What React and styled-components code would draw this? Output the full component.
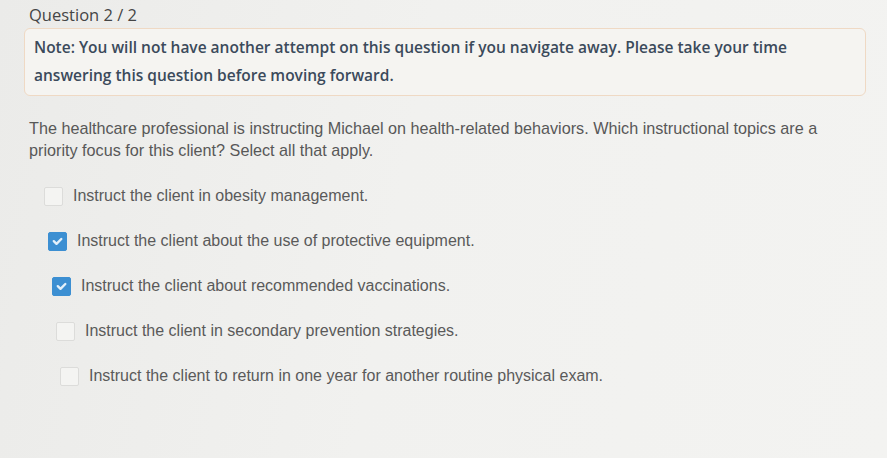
import React from 'react'
import styled, { createGlobalStyle } from 'styled-components'

const Global = createGlobalStyle`
  html, body {
    margin: 0;
    padding: 0;
    background: #efefed;
  }
  body {
    font-family: "Liberation Sans", Arial, sans-serif;
  }
`

const Page = styled.div`
  width: 887px;
  height: 458px;
  overflow: hidden;
  box-sizing: border-box;
  padding: 4px 21px 0 24px;
  background: linear-gradient(100deg, #ebebe9 0%, #f1f1ef 45%, #f3f3f1 100%);
`

const Heading = styled.div`
  font-family: "Open Sans", "Liberation Sans", sans-serif;
  font-size: 16.5px;
  color: #454545;
  padding-left: 5px;
  line-height: 22px;
`

const NoteBox = styled.div`
  margin-top: 2px;
  border: 1px solid #efd9c4;
  border-radius: 6px;
  background: #f5f4f1;
  padding: 4px 10px 6px 9px;
  font-family: "Open Sans", "Liberation Sans", sans-serif;
  font-weight: 600;
  font-size: 15.5px;
  line-height: 28px;
  color: #3b4a5b;
`

const QuestionText = styled.p`
  margin: 21px 0 0 5px;
  font-size: 16.2px;
  line-height: 22px;
  color: #585858;
  padding-right: 20px;
`

const Options = styled.div`
  margin-top: 24px;
  display: flex;
  flex-direction: column;
  gap: 23px;
`

const Option = styled.label`
  display: flex;
  align-items: center;
  gap: 10px;
  padding-left: ${p => p.$indent}px;
  font-size: 16px;
  color: #5a5a5a;
  line-height: 22px;
`

const Box = styled.span`
  width: 19px;
  height: 19px;
  box-sizing: border-box;
  border-radius: 2px;
  display: inline-flex;
  align-items: center;
  justify-content: center;
  flex: none;
  background: ${p => (p.$checked ? '#3c8fd2' : '#f4f4f2')};
  border: 1px solid ${p => (p.$checked ? '#3c8fd2' : '#dcdcda')};
`

const Check = () => (
  <svg width="11" height="9" viewBox="0 0 11 9">
    <path d="M1.8 4.2 L4.5 6.8 L9.3 2" fill="none" stroke="#e3f0fa" strokeWidth="2.4" strokeLinecap="round" strokeLinejoin="round" />
  </svg>
)

const options = [
  { text: 'Instruct the client in obesity management.', checked: false },
  { text: 'Instruct the client about the use of protective equipment.', checked: true },
  { text: 'Instruct the client about recommended vaccinations.', checked: true },
  { text: 'Instruct the client in secondary prevention strategies.', checked: false },
  { text: 'Instruct the client to return in one year for another routine physical exam.', checked: false },
]

export default function App() {
  return (
    <>
      <Global />
      <Page>
        <Heading>Question 2 / 2</Heading>
        <NoteBox>
          Note: You will not have another attempt on this question if you navigate away. Please take your time
          answering this question before moving forward.
        </NoteBox>
        <QuestionText>
          The healthcare professional is instructing Michael on health-related behaviors. Which instructional topics are a
          priority focus for this client? Select all that apply.
        </QuestionText>
        <Options>
          {options.map((o, i) => (
            <Option key={i} $indent={20 + i * 4}>
              <Box $checked={o.checked}>{o.checked && <Check />}</Box>
              {o.text}
            </Option>
          ))}
        </Options>
      </Page>
    </>
  )
}
